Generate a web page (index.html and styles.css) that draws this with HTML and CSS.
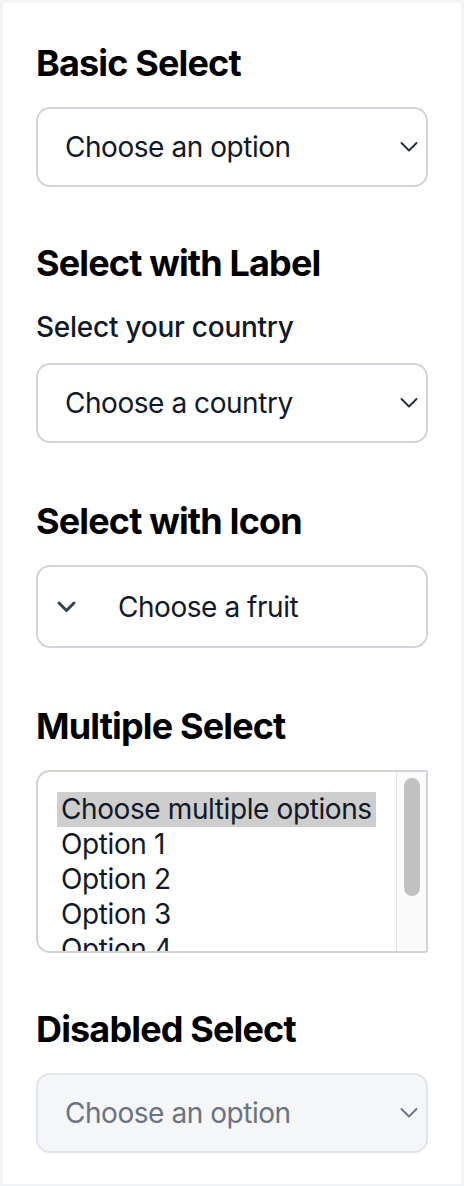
FILE: index.html
```html
<!DOCTYPE html>
<html lang="en">
<head>
<meta charset="utf-8">
<title>Select examples</title>
<link rel="stylesheet" href="styles.css">
</head>
<body>
<main class="panel">
  <section class="group">
    <h2 class="title">Basic Select</h2>
    <div class="select">
      <span class="value">Choose an option</span>
      <svg class="chev" width="18" height="10" viewBox="0 0 18 10"><polyline points="1.5,1 9,8.5 16.5,1" fill="none" stroke="currentColor" stroke-width="1.8" stroke-linecap="round" stroke-linejoin="round"/></svg>
    </div>
  </section>

  <section class="group group-label">
    <h2 class="title">Select with Label</h2>
    <label class="label">Select your country</label>
    <div class="select">
      <span class="value">Choose a country</span>
      <svg class="chev" width="18" height="10" viewBox="0 0 18 10"><polyline points="1.5,1 9,8.5 16.5,1" fill="none" stroke="currentColor" stroke-width="1.8" stroke-linecap="round" stroke-linejoin="round"/></svg>
    </div>
  </section>

  <section class="group group-icon">
    <h2 class="title">Select with Icon</h2>
    <div class="select select-icon">
      <svg class="lead" width="19" height="12" viewBox="0 0 19 12"><polyline points="2,2 9.5,9.5 17,2" fill="none" stroke="currentColor" stroke-width="3" stroke-linecap="round" stroke-linejoin="round"/></svg>
      <span class="value">Choose a fruit</span>
    </div>
  </section>

  <section class="group">
    <h2 class="title">Multiple Select</h2>
    <div class="listbox">
      <div class="options">
        <span class="option selected">Choose multiple options</span>
        <span class="option">Option 1</span>
        <span class="option">Option 2</span>
        <span class="option">Option 3</span>
        <span class="option">Option 4</span>
        <span class="option">Option 5</span>
      </div>
      <div class="track"><div class="thumb"></div></div>
    </div>
  </section>

  <section class="group">
    <h2 class="title">Disabled Select</h2>
    <div class="select disabled">
      <span class="value">Choose an option</span>
      <svg class="chev" width="18" height="10" viewBox="0 0 18 10"><polyline points="1.5,1 9,8.5 16.5,1" fill="none" stroke="currentColor" stroke-width="1.8" stroke-linecap="round" stroke-linejoin="round"/></svg>
    </div>
  </section>
</main>
</body>
</html>
```

FILE: styles.css
```css
html, body {
  margin: 0;
  padding: 0;
}

body {
  background: #f3f4f6;
  padding: 3px;
  font-family: Inter, "Noto Sans", "Liberation Sans", sans-serif;
  color: #111827;
}

.panel {
  background: #ffffff;
  padding: 32px 33px 31px;
  display: flex;
  flex-direction: column;
  gap: 48px;
  min-height: 1117px;
}

.group {
  display: flex;
  flex-direction: column;
}

.group-label {
  padding-bottom: 2px;
}

.group-icon {
  padding-bottom: 2px;
}

.title {
  margin: 0 0 16px;
  font-size: 36px;
  line-height: 56px;
  font-weight: 700;
  color: #000000;
  letter-spacing: -0.85px;
}

.label {
  font-size: 28px;
  line-height: 40px;
  font-weight: 500;
  color: #111827;
  margin-bottom: 16px;
  letter-spacing: -0.25px;
}

.select {
  box-sizing: border-box;
  height: 80px;
  border: 2px solid #d1d5db;
  border-radius: 14px;
  background: #ffffff;
  display: flex;
  align-items: center;
  justify-content: space-between;
  padding: 0 8px 0 27px;
}

.value {
  font-size: 28px;
  line-height: 40px;
  color: #111827;
  letter-spacing: -0.45px;
}

.chev {
  color: #1f2937;
  display: block;
}

.select-icon {
  height: 83px;
  justify-content: flex-start;
  padding-left: 19px;
}

.lead {
  color: #374151;
  display: block;
  margin-right: 42px;
}

.listbox {
  box-sizing: border-box;
  height: 183px;
  border: 2px solid #d1d5db;
  border-radius: 14px 2px 2px 14px;
  display: flex;
  overflow: hidden;
  background: #ffffff;
}

.options {
  flex: 1;
  padding: 20px 0 0 19px;
  display: flex;
  flex-direction: column;
  align-items: flex-start;
}

.option {
  font-size: 28px;
  line-height: 35px;
  padding: 0 4px;
  color: #111827;
  white-space: nowrap;
  letter-spacing: -0.4px;
}

.option.selected {
  background: #cecece;
}

.track {
  width: 29px;
  border-left: 1px solid #e6e6e6;
  background: #fafafa;
  padding-top: 6px;
}

.thumb {
  width: 16px;
  height: 118px;
  margin-left: 7px;
  border-radius: 8px;
  background: #c1c1c1;
}

.disabled {
  background: #f5f6f8;
  border-color: #e1e4e8;
}

.disabled .value {
  color: #6b7280;
}

.disabled .chev {
  color: #6b7280;
}
```
